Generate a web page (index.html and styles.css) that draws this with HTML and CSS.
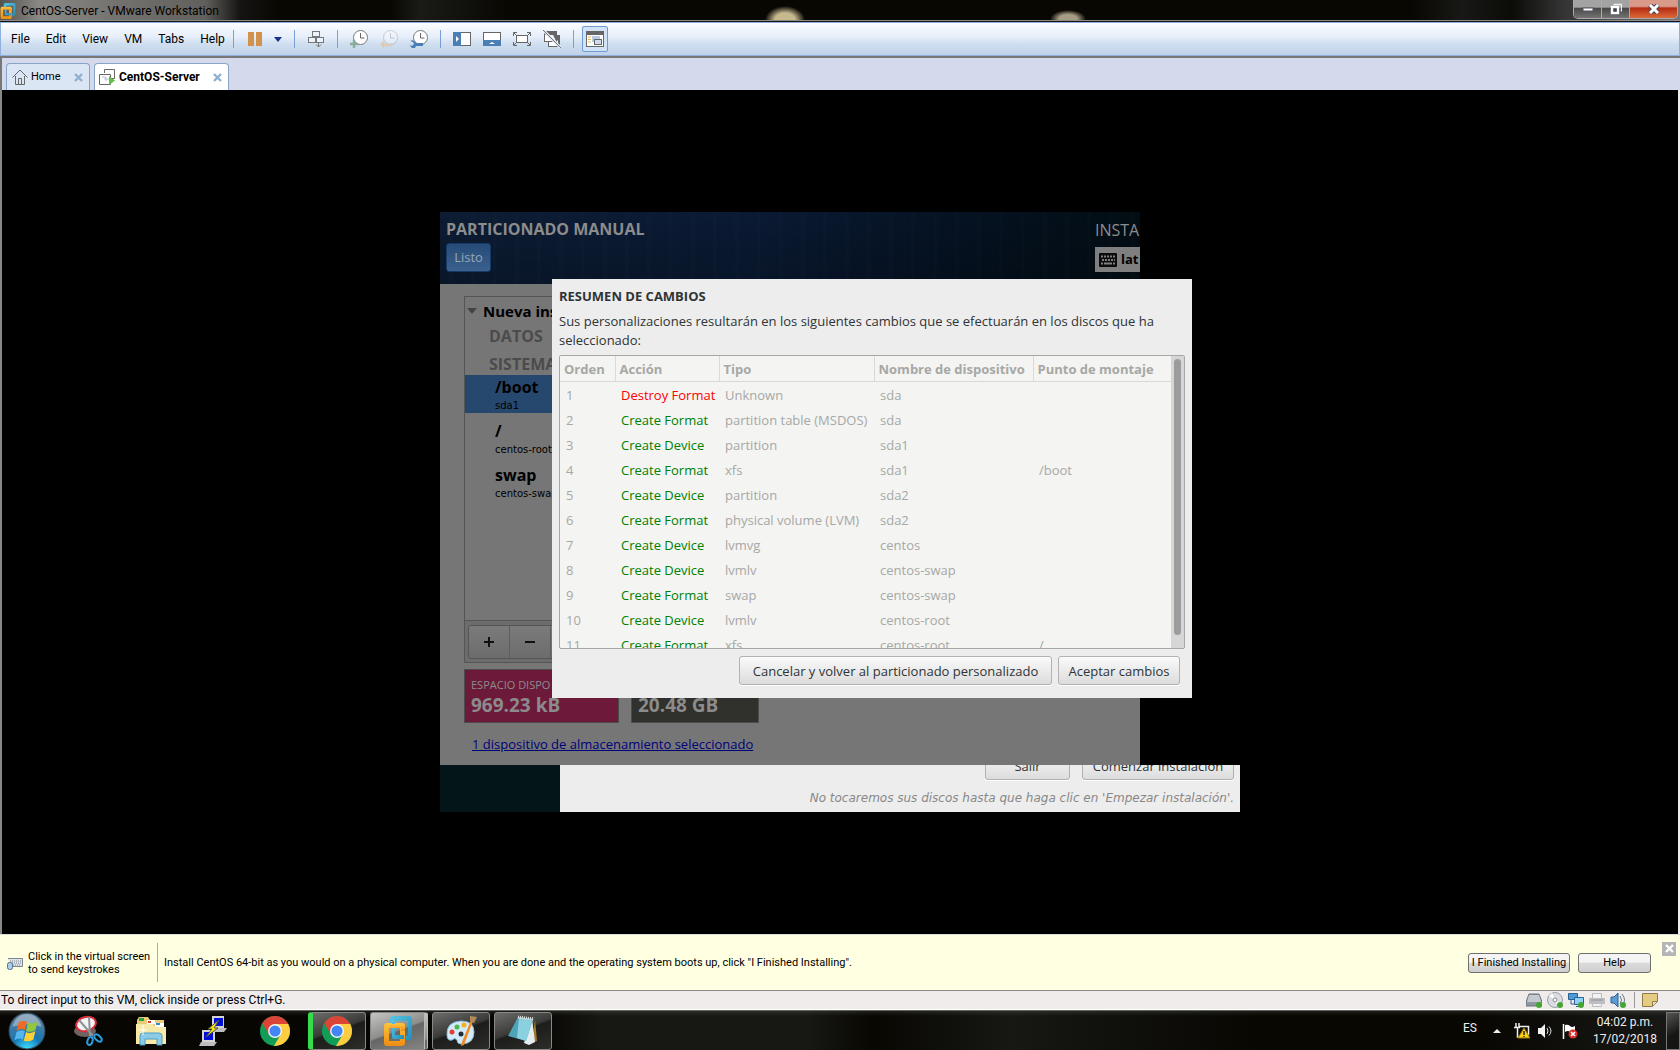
FILE: index.html
```html
<!DOCTYPE html>
<html lang="es">
<head>
<meta charset="utf-8">
<title>CentOS-Server - VMware Workstation</title>
<link rel="stylesheet" href="styles.css">
</head>
<body>
<svg class="defs" aria-hidden="true">
  <defs>
    <linearGradient id="amber" x1="0" y1="0" x2="0" y2="1"><stop offset="0" stop-color="#fdc33d"/><stop offset="1" stop-color="#ee8d12"/></linearGradient>
    <linearGradient id="sky" x1="0" y1="0" x2="1" y2="1"><stop offset="0" stop-color="#5cc4e4"/><stop offset="1" stop-color="#1f8fb8"/></linearGradient>
    <symbol id="vmware" viewBox="0 0 28 30">
      <path fill="url(#sky)" d="M9 0h16q3 0 3 3v18q0 3-3 3h-3v-4h2V5H11v3H6V3q0-3 3-3z"/>
      <path fill="url(#amber)" d="M3 7h15q3 0 3 3v17q0 3-3 3H3q-3 0-3-3V10q0-3 3-3zM5 12v13h11V12z" fill-rule="evenodd"/>
      <path fill="url(#sky)" d="M8 4h3v15h9v4H10q-2 0-2-2z"/>
      <path fill="url(#amber)" d="M6 8h12q3 0 3 3v4h-4v-3H6z"/>
    </symbol>
    <symbol id="chrome" viewBox="0 0 28 28">
      <clipPath id="disc"><circle cx="14" cy="14" r="14"/></clipPath>
      <g clip-path="url(#disc)">
        <path fill="#0f9d58" d="M0 0h28v28H0z"/>
        <path fill="#ffcd40" d="M14 7.500H28V28H13l6.500-11z"/>
        <path fill="#db4437" d="M0 4V0h28v7.500H14L8.400 17.200 1.500 6z"/>
      </g>
      <circle cx="14" cy="14" r="6.500" fill="#f4f4f4"/><circle cx="14" cy="14" r="5.200" fill="#4285f4"/>
    </symbol>
    <symbol id="clock" viewBox="0 0 18 18">
      <circle cx="10.500" cy="7.500" r="7" fill="#fff" stroke="#777" stroke-width="1"/><path d="M10.500 3v5h4" fill="none" stroke="#666"/>
    </symbol>
    <symbol id="closex" viewBox="0 0 9 9"><path d="M1 1l7 7M8 1L1 8" stroke="currentColor" stroke-width="2.400"/></symbol>
  </defs>
</svg>

<header class="titlebar">
  <div class="caption">
    <svg width="16" height="16"><use href="#vmware"/></svg>
    <span>CentOS-Server - VMware Workstation</span>
  </div>
  <div class="window-controls">
    <button class="ctl" aria-label="Minimizar"><svg width="12" height="5"><rect x="1" y="1" width="10" height="3" fill="#fff" stroke="#556"/></svg></button>
    <button class="ctl" aria-label="Restaurar"><svg width="12" height="12"><path d="M3.500 1.500h8v7" fill="none" stroke="#eee" stroke-width="1.500"/><rect x="2" y="4" width="6" height="6" fill="#445" stroke="#fff" stroke-width="2.400"/></svg></button>
    <button class="ctl ctl-close" aria-label="Cerrar"><svg width="12" height="10"><path d="M2 1l8 8M10 1L2 9" stroke="#445" stroke-width="5"/><path d="M2 1l8 8M10 1L2 9" stroke="#fff" stroke-width="3"/></svg></button>
  </div>
</header>

<nav class="menubar">
  <div class="menus">
    <button>File</button><button>Edit</button><button>View</button><button>VM</button><button>Tabs</button><button>Help</button>
  </div>
  <div class="tools group-power">
    <button aria-label="Pause"><svg width="14" height="14"><path fill="#d1924c" d="M0 0h6v14H0zM8 0h6v14H8z"/></svg></button>
    <button aria-label="Power menu"><svg width="8" height="5"><path d="M0 0h8L4 5z" fill="#16318f"/></svg></button>
  </div>
  <div class="tools">
    <button aria-label="Send keys"><svg width="18" height="18" fill="#edf3fb" stroke="#777"><rect x="5.500" y="1.500" width="7" height="5"/><rect x="1.500" y="7.500" width="7" height="5"/><rect x="9.500" y="7.500" width="7" height="5"/><path d="M11.500 12v5M9 14.500l2.500 2.500 2.500-2.500" fill="none"/></svg></button>
  </div>
  <div class="tools">
    <button aria-label="Take snapshot"><svg width="18" height="18"><use href="#clock"/><path d="M4 10v8M0 14h8" stroke="#86ae9a" stroke-width="2.400"/></svg></button>
    <button aria-label="Revert snapshot"><svg width="18" height="18"><use href="#clock" opacity=".3"/><path d="M0 14.500l4-4v3h8v3H4v2z" fill="#dccabb"/></svg></button>
    <button aria-label="Manage snapshots"><svg width="18" height="18"><use href="#clock"/><path d="M0 11l3 1 1 2-2 2-2-1q1 4 5 3l1-2h7v-3H6q-2-4-6-2z" fill="#4a7fb5"/></svg></button>
  </div>
  <div class="tools">
    <button aria-label="Library"><svg width="18" height="14"><rect x=".5" y=".5" width="17" height="13" fill="#fff" stroke="#666"/><path d="M0 0h8v14H0z" fill="#4a7fb5"/><path d="M3 4l3 3-3 3z" fill="#fff"/></svg></button>
    <button aria-label="Thumbnail bar"><svg width="18" height="14"><rect x=".5" y=".5" width="17" height="13" fill="#fff" stroke="#666"/><path d="M0 8h18v6H0z" fill="#4a7fb5"/><path d="M6 12l3-2 3 2z" fill="#fff"/></svg></button>
    <button aria-label="Full screen"><svg width="18" height="14" fill="none" stroke="#666"><rect x="3.500" y="3.500" width="11" height="7" fill="#fff"/><path d="M.500 4V.500H4M14 .500h3.500V4M17.500 10v3.500H14M4 13.500H.500V10M1 1l2 2M17 1l-2 2M1 13l2-2M17 13l-2-2"/></svg></button>
    <button aria-label="Unity"><svg width="18" height="18"><path d="M1 1h13v4h3v12H5v-5H1z" fill="#666"/><path d="M2 5h8l3 6H2zM6 12h7l2-2v6H6z" fill="#fff"/><path d="M0 0l18 18" stroke="#dfe9f6" stroke-width="3"/><path d="M0 0l18 18" stroke="#777"/></svg></button>
  </div>
  <div class="tools last">
    <button class="pressed" aria-label="Console view"><svg width="18" height="16"><rect x=".5" y=".5" width="17" height="15" fill="#fff" stroke="#666"/><path d="M0 0h18v4H0z" fill="#666"/><path d="M2 6h3M2 8.500h3M2 11h3" stroke="#e8b95c"/><path d="M6 5h8v6H6z" fill="#b9cbe2"/><rect x="8.500" y="8.500" width="7" height="5" fill="#cfdcf0" stroke="#666"/></svg></button>
  </div>
</nav>

<div class="tabs">
  <div class="tab">
    <svg width="16" height="16" fill="none" stroke="#666"><path d="M.500 8.500L8 1l7.500 7.500M3.500 7v8.500h9V7M6.500 15V9.500h3V15"/></svg>
    <a href="#home">Home</a>
    <button aria-label="Close Home"><svg width="9" height="9"><use href="#closex"/></svg></button>
  </div>
  <div class="tab current">
    <svg width="16" height="16" fill="none" stroke="#666"><path d="M5.500 4V.500h10v9H12"/><path d="M.500 5.500h11v10H.500z" fill="#fff"/><path d="M3 8h4v4M5 10h5" stroke="#b9c3dd"/><path d="M10 7l6 4.500-6 4.500z" fill="#5fc043" stroke="none"/></svg>
    <a href="#vm">CentOS-Server</a>
    <button aria-label="Close CentOS-Server"><svg width="9" height="9"><use href="#closex"/></svg></button>
  </div>
</div>

<main class="console" id="vm">
  <div class="screen">
    <section class="hub">
      <div class="hub-body">
        <div class="hub-actions"><button class="btn quit">Salir</button><button class="btn begin">Comenzar instalación</button></div>
        <p class="hub-note">No tocaremos sus discos hasta que haga clic en 'Empezar instalación'.</p>
      </div>
    </section>

    <section class="manual">
      <div class="manual-head">
        <div class="head-left"><h1>PARTICIONADO MANUAL</h1><button class="done">Listo</button></div>
        <div class="head-right">
          <span class="product">INSTA</span>
          <div class="layout"><svg width="18" height="14"><rect width="18" height="14" rx="1" fill="#0b0b0b"/><path d="M2 3.500h14M3 7h13" stroke="#7f7f7f" stroke-width="2" stroke-dasharray="2 1"/><path d="M2 10.500h2M5 10.500h8M14 10.500h2" stroke="#7f7f7f" stroke-width="2"/></svg><b>lat</b></div>
        </div>
      </div>
      <div class="manual-body">
        <div class="tree">
          <h2><svg width="10" height="6"><path d="M0 0h10L5 6z" fill="#444"/></svg>Nueva ins</h2>
          <h3>DATOS</h3>
          <h3 class="sys">SISTEMA</h3>
          <div class="mount active"><b>/boot</b><small>sda1</small></div>
          <div class="mount"><b>/</b><small>centos-root</small></div>
          <div class="mount"><b>swap</b><small>centos-swap</small></div>
        </div>
        <div class="tree-tools"><div class="joined"><button aria-label="Agregar"><svg width="10" height="10"><path d="M5 0v10M0 5h10" stroke="#111" stroke-width="2"/></svg></button><button aria-label="Quitar"><svg width="10" height="10"><path d="M0 5h10" stroke="#111" stroke-width="2"/></svg></button></div></div>
        <div class="space">
          <div class="card pink"><span>ESPACIO DISPO</span><b>969.23 kB</b></div>
          <div class="card dark"><b>20.48 GB</b></div>
        </div>
        <a class="devices" href="#devices">1 dispositivo de almacenamiento seleccionado</a>
      </div>
    </section>

    <section class="dialog" role="dialog" aria-labelledby="dlg-title">
      <h2 id="dlg-title">RESUMEN DE CAMBIOS</h2>
      <p>Sus personalizaciones resultarán en los siguientes cambios que se efectuarán en los discos que ha seleccionado:</p>
      <div class="list">
        <table>
          <colgroup><col class="c1"><col class="c2"><col class="c3"><col class="c4"><col></colgroup>
          <thead><tr><th>Orden</th><th>Acción</th><th>Tipo</th><th>Nombre de dispositivo</th><th>Punto de montaje</th></tr></thead>
          <tbody>
            <tr><td>1</td><td class="destroy">Destroy Format</td><td>Unknown</td><td>sda</td><td></td></tr>
            <tr><td>2</td><td class="create">Create Format</td><td>partition table (MSDOS)</td><td>sda</td><td></td></tr>
            <tr><td>3</td><td class="create">Create Device</td><td>partition</td><td>sda1</td><td></td></tr>
            <tr><td>4</td><td class="create">Create Format</td><td>xfs</td><td>sda1</td><td>/boot</td></tr>
            <tr><td>5</td><td class="create">Create Device</td><td>partition</td><td>sda2</td><td></td></tr>
            <tr><td>6</td><td class="create">Create Format</td><td>physical volume (LVM)</td><td>sda2</td><td></td></tr>
            <tr><td>7</td><td class="create">Create Device</td><td>lvmvg</td><td>centos</td><td></td></tr>
            <tr><td>8</td><td class="create">Create Device</td><td>lvmlv</td><td>centos-swap</td><td></td></tr>
            <tr><td>9</td><td class="create">Create Format</td><td>swap</td><td>centos-swap</td><td></td></tr>
            <tr><td>10</td><td class="create">Create Device</td><td>lvmlv</td><td>centos-root</td><td></td></tr>
            <tr><td>11</td><td class="create">Create Format</td><td>xfs</td><td>centos-root</td><td>/</td></tr>
          </tbody>
        </table>
        <div class="scroll"><div class="thumb"></div></div>
      </div>
      <div class="dialog-actions"><button class="btn cancel">Cancelar y volver al particionado personalizado</button><button class="btn accept">Aceptar cambios</button></div>
    </section>
  </div>
</main>

<aside class="hint">
  <svg width="16" height="14"><path d="M1 2.500h14.500v8H5" fill="#dfe4ea" stroke="#7c848e"/><path d="M3 5h11M5 7h9M6 9h8" stroke="#7c848e" stroke-dasharray="1 1"/><rect x=".5" y="6.500" width="5" height="7" rx="2" fill="#a9d0ea" stroke="#56708a"/></svg>
  <p class="keys">Click in the virtual screen<br>to send keystrokes</p>
  <p class="install">Install CentOS 64-bit as you would on a physical computer. When you are done and the operating system boots up, click "I Finished Installing".</p>
  <button class="win">I Finished Installing</button>
  <button class="win help">Help</button>
  <button class="dismiss" aria-label="Close"><svg width="9" height="9"><use href="#closex"/></svg></button>
</aside>

<footer class="status">
  <span>To direct input to this VM, click inside or press Ctrl+G.</span>
  <div class="devs">
    <svg width="16" height="16"><path d="M3 2h10l3 8v4H0v-4z" fill="#8f979f" stroke="#68717c"/><path d="M3 3h10l2 7H1z" fill="#c5cad0"/><circle cx="13" cy="13" r="3" fill="#45a532"/></svg>
    <svg width="16" height="16"><circle cx="8" cy="8" r="7.500" fill="#dadde2" stroke="#9aa0a8"/><path d="M8 8L2 4l3-3zM8 8l6 3-3 4z" fill="#fff"/><circle cx="8" cy="8" r="2" fill="#fff" stroke="#888"/><circle cx="13" cy="13" r="3" fill="#45a532"/></svg>
    <svg width="16" height="16"><path d="M.500 1.500h9v6h-9z" fill="#4b9bd8" stroke="#2c5f93"/><path d="M6.500 5.500h9v7h-9z" fill="#8fd0f5" stroke="#2c5f93"/><path d="M3 8v4h3M8 14.500h6" stroke="#2c5f93" fill="none"/><circle cx="13" cy="13" r="3" fill="#45a532"/></svg>
    <svg width="16" height="16"><path d="M3.500 1.500h9v13h-9z" fill="#f2f2f2" stroke="#bbb"/><path d="M0 6h16v6H0z" fill="#bdbdc2"/><path d="M2 8h12" stroke="#929298"/></svg>
    <svg width="16" height="16"><path d="M1 5h3l4-4v14l-4-4H1z" fill="#5b9dd6" stroke="#2c5f93"/><path d="M10 4q3 4 0 8M12 2q5 6 0 12" fill="none" stroke="#6a7886"/><circle cx="13" cy="13" r="3" fill="#45a532"/></svg>
    <i></i>
    <svg width="16" height="16"><path d="M.500 1.500h15v8l-5 5H.500z" fill="#e6cb82" stroke="#8d7a4a"/><path d="M15 9.500h-4.500V14" fill="#f6e8bb" stroke="#8d7a4a"/></svg>
  </div>
</footer>

<div class="taskbar">
  <button class="start" aria-label="Inicio"><svg width="38" height="38" viewBox="0 0 36 36"><defs><radialGradient id="orb" cx=".5" cy="1" r=".9"><stop offset="0" stop-color="#3ee0ff"/><stop offset=".45" stop-color="#1576b4"/><stop offset="1" stop-color="#5a7e9c"/></radialGradient></defs><circle cx="18" cy="18" r="17" fill="url(#orb)" stroke="#30485a"/><path d="M4 14q4-12 14-12t14 12q-14-5-28 0z" fill="#fff" opacity=".35"/><path d="M10 10q4-3 8-1l-2 8q-4-2-8 1z" fill="#ef6a27"/><path d="M19 10q4 2 9-1l-2 8q-5 3-9 1z" fill="#93c83d"/><path d="M8 19q4-3 8-1l-2 8q-4-2-8 1z" fill="#55b5ec"/><path d="M17 19q4 2 9-1l-2 8q-5 3-9 1z" fill="#fdcf35"/></svg></button>
  <button class="task" aria-label="Recortes"><svg width="30" height="32"><ellipse cx="11" cy="16" rx="11" ry="6" fill="#6f6262"/><ellipse cx="12" cy="9" rx="10" ry="7" fill="#f4f4f4" stroke="#d8303a" stroke-width="2" transform="rotate(-15 12 9)"/><path d="M5 5l14 16M15 2l1 19" stroke="#8c9297" stroke-width="2"/><ellipse cx="16" cy="26" rx="2.500" ry="4" fill="none" stroke="#2b9bdc" stroke-width="2" transform="rotate(20 16 26)"/><ellipse cx="24" cy="23" rx="2.500" ry="4.500" fill="none" stroke="#2b9bdc" stroke-width="2" transform="rotate(-45 24 23)"/></svg></button>
  <button class="task" aria-label="Explorador"><svg width="32" height="32"><path d="M2 5l2-3h9l2 3h14v22H2z" fill="#e9cc73"/><path d="M4 3h5v3H4z" fill="#26a54a"/><path d="M12 5h8v4h-8z" fill="#fff"/><path d="M13 6h3v2h-3z" fill="#d0402b"/><path d="M20 8h9v4h-9z" fill="#fff"/><path d="M21 8h4v2h-4z" fill="#2f8bd4"/><path d="M1 9h17l2 3h11v17H1z" fill="#f7e9a8"/><path d="M5 30v-9q0-3 3-3h16q3 0 3 3v9h-5v-6H10v6z" fill="#8ccbe8" stroke="#4f9cc4"/><path d="M8 10v10M4 15h8" stroke="#fff"/></svg></button>
  <button class="task" aria-label="PuTTY"><svg width="30" height="32"><path d="M14 1h12v12H14z" fill="#d4d4d4"/><path d="M16 3h9v8h-9z" fill="#0010d8"/><path d="M14 13h15l-3 4H12z" fill="#bdbdbd"/><path d="M4 15h13v12H4z" fill="#d4d4d4"/><path d="M6 17h9v8H6z" fill="#0010d8"/><path d="M3 27h16l-3 4H1z" fill="#bdbdbd"/><path d="M21 5L10 14h4l-6 8 12-9h-4z" fill="#ffee00" stroke="#554"/></svg></button>
  <button class="task" aria-label="Chrome"><svg width="30" height="30"><use href="#chrome"/></svg></button>
  <button class="task open green" aria-label="Chrome abierto"><svg width="30" height="30"><use href="#chrome"/></svg></button>
  <button class="task open front" aria-label="VMware Workstation"><svg width="28" height="32"><use href="#vmware"/></svg></button>
  <button class="task open" aria-label="Paint"><svg width="32" height="32"><path d="M2 20Q1 7 16 6q13 0 13 11 0 12-13 12-4 0-4-4-2-3-5 0-5 1-5-5z" fill="#d3ebf8" stroke="#87bcdb"/><circle cx="16" cy="19" r="2.500" fill="#1d2d38"/><circle cx="7" cy="17" r="2.500" fill="#e23c30"/><circle cx="12" cy="12" r="2.500" fill="#4bb848"/><circle cx="19" cy="10" r="2.500" fill="#f8ae22"/><path d="M28 6l-9 24-3 1 1-4 9-22z" fill="#ee8a27"/><path d="M25 1l7 1-3 6-4-2z" fill="#b28a5a"/></svg></button>
  <button class="task open" aria-label="Bloc de notas"><svg width="32" height="32"><path d="M28 4l2 22-5 2z" fill="#a27a2d"/><path d="M25 3l3 24-6 3-5-2z" fill="#e4ecef"/><path d="M11 2l15 2-7 22-18-5z" fill="#4fa3b8"/><path d="M12 2l14 2-7 22-9-3z" fill="#8bd0de"/><path d="M11 2l16 2" stroke="#ddd" stroke-width="3" stroke-dasharray="1 1"/></svg></button>
  <div class="tray">
    <span class="lang">ES</span>
    <svg width="8" height="4"><path d="M0 4l4-4 4 4z" fill="#eee"/></svg>
    <div class="notices">
      <svg width="16" height="16"><path d="M5 3.500h9.500v8H7M2 0v4M5 0v4M0 4.500h6M3.500 5v9H7" fill="none" stroke="#eee" stroke-width="1.500"/><path d="M10 5l6 10H4z" fill="#fcd116" stroke="#9b7a00"/><path d="M10 8v4M10 13v1" stroke="#222" stroke-width="1.500"/></svg>
      <svg width="16" height="16"><path d="M0 5h3l4-4v14l-4-4H0z" fill="#f4f4f4"/><path d="M9 5q2 3 0 6M11 3.500q4 4.500 0 9" fill="none" stroke="#ddd"/></svg>
      <svg width="16" height="16"><path d="M1.500 1v15" stroke="#fff" stroke-width="1.500"/><path d="M3 2q3-1 5 1t5 0v7q-3 1-5-1t-5 0z" fill="#fff"/><circle cx="11" cy="11" r="4.500" fill="#d92f26"/><path d="M9 9l4 4M13 9l-4 4" stroke="#fff" stroke-width="1.500"/></svg>
    </div>
    <div class="time">04:02 p.m.<br>17/02/2018</div>
    <button class="peek" aria-label="Mostrar escritorio"></button>
  </div>
</div>
</body>
</html>
```
FILE: styles.css
```css
* { box-sizing: border-box; }
body {
  margin: 0;
  min-height: 100vh;
  display: flex;
  flex-direction: column;
  background: #000;
  color: #000;
  font: 12px/16px Roboto, "Liberation Sans", sans-serif;
}
h1, h2, h3, p { margin: 0; }
button { border: 0; padding: 0; background: none; font: inherit; color: inherit; }
a { color: inherit; text-decoration: none; }
svg { display: block; flex: none; }
.defs { position: absolute; width: 0; height: 0; }

/* Title bar */
.titlebar {
  display: flex;
  justify-content: space-between;
  height: 22px;
  border-bottom: 1px solid #151515;
  box-shadow: inset 0 -1px #8f8a88;
  background:
    radial-gradient(ellipse 20px 14px at 785px 20px, #c6b98e 0 50%, transparent),
    radial-gradient(ellipse 18px 9px at 1068px 19px, #a59d83 0 50%, transparent),
    linear-gradient(90deg, #55534f 0, #8b8986 40px, #73716e 120px, #62605d 205px, #151412 240px, #080702 280px, #080702 390px, #1a1a17 420px, #080702 510px, #080702 84%, #181816 87%, #0b0b08 90%, #333 93%, #777 100%);
}
.caption { display: flex; align-items: center; gap: 5px; }
.window-controls { display: flex; height: 19px; margin-right: 2px; border: 1px solid #aaa; border-top: 0; border-radius: 0 0 5px 5px; overflow: hidden; }
.ctl { width: 28px; display: flex; align-items: center; justify-content: center; border-right: 1px solid #aaa; background: linear-gradient(#a3a3a3 0 40%, #484848 45%, #737373); }
.ctl-close { width: 47px; border-right: 0; background: linear-gradient(#d99a8a 0 35%, #b52c12 45%, #dd6a38); }

/* Menu and toolbar */
.menubar {
  display: flex;
  align-items: center;
  height: 34px;
  padding-left: 2px;
  border: 1px solid #8fb0dc;
  background: linear-gradient(#fdfeff, #e4edf9 45%, #cfdff0 65%, #c0d2ea);
}
.menus button { padding: 0 8px; }
.tools { display: flex; align-items: center; gap: 12px; padding: 0 12px; height: 18px; border-left: 1px solid #7a9fd2; }
.group-power { padding: 0 12px 0 14px; }
.last { padding: 0 8px; }
.pressed { width: 26px; height: 26px; display: grid; place-items: center; border: 1px solid #6f9ad2; border-radius: 2px; background: #d2e2f7; }

/* Tabs */
.tabs {
  display: flex;
  align-items: flex-end;
  gap: 4px;
  height: 34px;
  padding-left: 4px;
  border: solid #777;
  border-width: 2px 0 0 2px;
  background: #d4d9ec;
}
.tab { display: flex; align-items: center; gap: 3px; height: 27px; width: 84px; padding: 0 6px 0 5px; border: 1px solid #86a5c8; border-bottom: 0; border-radius: 4px 4px 0 0; background: #dbe6f5; font-size: 11px; }
.tab button { margin-left: auto; color: #8fb0cf; }
.current { width: 135px; gap: 4px; padding-left: 4px; background: #fff; font-weight: 700; font-size: 12px; }

/* Virtual machine display */
.console { flex: 1; display: grid; place-items: center; background: #000; border: solid; border-width: 0 2px; border-color: #777 #eee #777 #888; }
.screen { position: relative; width: 800px; height: 600px; color: #2e3436; font: 13px/19px "Open Sans", "Noto Sans", sans-serif; }
.btn { height: 29px; padding: 2px 0 0; border: 1px solid #b2b2b2; border-radius: 3px; background: linear-gradient(#fafafa, #dcdcdc); box-shadow: 0 1px #fff; }

.hub { height: 100%; display: flex; padding-left: 120px; background: #031519; }
.hub-body { flex: 1; display: flex; flex-direction: column; justify-content: flex-end; align-items: flex-end; gap: 9px; padding: 0 6px 4px; background: #ededed; }
.hub-actions { display: flex; gap: 12px; }
.quit { width: 85px; }
.begin { width: 152px; }
.hub-note { font: italic 12px/19px "DejaVu Sans", sans-serif; color: #888; }

.manual { position: absolute; left: 0; top: 0; width: 700px; height: 553px; overflow: hidden; background: #767676; color: #000; }
.screen::before { content: ""; position: absolute; inset: 0 0 47px; background: #000; }
.manual-head { display: flex; justify-content: space-between; height: 72px; padding-left: 6px; background: repeating-linear-gradient(90deg, transparent 0 9px, #ffffff02 9px 13px, transparent 13px 22px), linear-gradient(#0000, #0003), linear-gradient(90deg, #0c1c33, #0a1a33 45%, #051222 75%, #020d13); color: #8c8c8c; }
.head-left h1 { padding-top: 7px; font-size: 16px; line-height: 20px; }
.done { width: 45px; height: 29px; margin-top: 4px; border: 1px solid #153a66; border-radius: 3px; background: linear-gradient(#264b78, #3a618f); color: #9aa5b2; }
.head-right { width: 45px; padding-top: 8px; }
.product { display: block; font-size: 16px; line-height: 20px; }
.layout { display: flex; align-items: center; gap: 4px; height: 25px; margin-top: 7px; padding-left: 4px; background: #7f7f7f; color: #000; }
.manual-body { padding: 12px 24px; }
.tree { width: 280px; height: 325px; padding-top: 3px; border: 1px solid #555; }
.tree h2 { display: flex; align-items: center; gap: 6px; padding-left: 2px; font-size: 15px; line-height: 22px; }
.tree h3 { padding: 4px 0 0 24px; font-size: 16px; line-height: 21px; color: #4b4b4b; }
.tree .sys { padding: 8px 0 1px 24px; line-height: 19px; }
.mount { height: 38px; margin-bottom: 6px; padding: 2px 0 0 30px; }
.mount b, .mount small { display: block; }
.mount b { font-size: 16px; line-height: 20px; }
.mount small { font-size: 10px; line-height: 18px; font-family: "DejaVu Sans", sans-serif; white-space: nowrap; }
.active { background: #26486f; }
.tree-tools { width: 280px; height: 42px; padding: 4px 3px; border: 1px solid #555; border-top: 0; background: #6c6c6c; }
.joined { display: flex; height: 34px; border: 1px solid #555; border-radius: 3px; background: linear-gradient(#7b7b7b, #6c6c6c); }
.joined button { width: 41px; display: grid; place-items: center; border-right: 1px solid #5e5e5e; }
.space { display: flex; gap: 12px; margin-top: 6px; }
.card { display: flex; flex-direction: column; justify-content: flex-end; height: 54px; padding: 0 6px 6px; border: 1px solid #4c4c4c; color: #8b8b8b; }
.card span { font-size: 11px; line-height: 18px; }
.card b { font-size: 19px; line-height: 22px; }
.pink { width: 155px; background: #6d1a3a; }
.dark { width: 128px; background: #30302c; }
.devices { display: inline-block; margin: 12px 8px 0; color: #00007b; text-decoration: underline; }

.dialog { position: absolute; left: 112px; top: 67px; width: 640px; padding: 7px 7px 13px; background: #ededed; }
.dialog h2 { font-size: 13px; line-height: 20px; }
.dialog p { padding: 6px 0 5px; }
.list { display: flex; height: 294px; overflow: hidden; border: 1px solid #a5a8a5; border-radius: 2px; background: #f4f4f2; }
table { flex: 1; align-self: flex-start; table-layout: fixed; border-collapse: collapse; color: #a6a8a5; }
.c1 { width: 55px; } .c2 { width: 104px; } .c3 { width: 155px; } .c4 { width: 159px; }
th, td { padding: 0 0 0 6px; height: 25px; text-align: left; white-space: nowrap; }
th { padding: 2px 0 0 4px; border: solid #d9d9d7; border-width: 0 1px 1px 0; }
th:last-child { border-right: 0; }
tbody tr:first-child td { height: 27px; padding-top: 2px; }
.destroy { color: #f00; }
.create { color: #008000; }
.scroll { width: 13px; padding: 3px 3px 13px; background: #d6d6d6; }
.thumb { height: 100%; border-radius: 4px; background: #9b9c9d; }
.dialog-actions { display: flex; justify-content: flex-end; gap: 6px; padding: 7px 5px 0 0; }
.cancel { width: 313px; }
.accept { width: 122px; }

/* Installation hint */
.hint { display: flex; align-items: center; height: 57px; padding: 0 4px 0 7px; border: solid; border-width: 1px 0; border-color: #ddd #ddd #8b8b8b; background: #ffffe1; font-size: 11px; line-height: 13px; }
.keys { width: 130px; margin: 0 6px 0 5px; padding: 7px 0 6px; border-right: 1px solid #aaa; white-space: nowrap; }
.install { margin-right: auto; }
.win { width: 102px; height: 20px; margin-right: 8px; border: 1px solid #707070; border-radius: 3px; background: linear-gradient(#f4f4f4 0 45%, #dcdcdc 50%, #cfcfcf); }
.help { width: 73px; margin-right: 11px; }
.dismiss { display: grid; place-items: center; width: 14px; height: 14px; margin-bottom: 28px; background: #b5b5b5; color: #fff; }

/* Status bar */
.status { display: flex; align-items: center; justify-content: space-between; height: 19px; padding: 0 22px 0 1px; background: #f0ecec; border-bottom: 1px solid #fff; }
.devs { display: flex; align-items: center; gap: 5px; }
.devs i { width: 1px; height: 16px; margin: 0 2px 0 3px; background: #999; }

/* Taskbar */
.taskbar { display: flex; align-items: center; gap: 4px; height: 40px; border-top: 1px solid #62655a; background: linear-gradient(#ffffff18, transparent 5px), linear-gradient(90deg, #070602 0 32%, #171713 36%, #171713 48%, #080702 52%, #171713 60%, #080702 75%, #080702 88%, #191917); color: #eee; }
.start { width: 56px; padding-left: 8px; }
.task { display: grid; place-items: center; width: 58px; height: 38px; }
.open { border: 1px solid #888; border-radius: 3px; background: linear-gradient(160deg, #6d6d6b, #3a3a38 45%, #1d1d1b 50%, #2c2c29); }
.green { border-left: 5px solid #34dd4a; padding-right: 4px; }
.front { border-right: 4px double #bbb; background: linear-gradient(160deg, #c5c5c4, #8d8d8c 48%, #666 52%, #858584); }
.tray { display: flex; align-items: center; margin-left: auto; height: 100%; }
.lang { margin: 0 16px 6px 0; }
.notices { display: flex; gap: 8px; margin-left: 13px; }
.time { width: 76px; margin: 0 3px 0 9px; text-align: center; line-height: 17px; }
.peek { width: 14px; height: 38px; border: 1px solid #777; background: linear-gradient(150deg, #555, #151513 60%); }
```
